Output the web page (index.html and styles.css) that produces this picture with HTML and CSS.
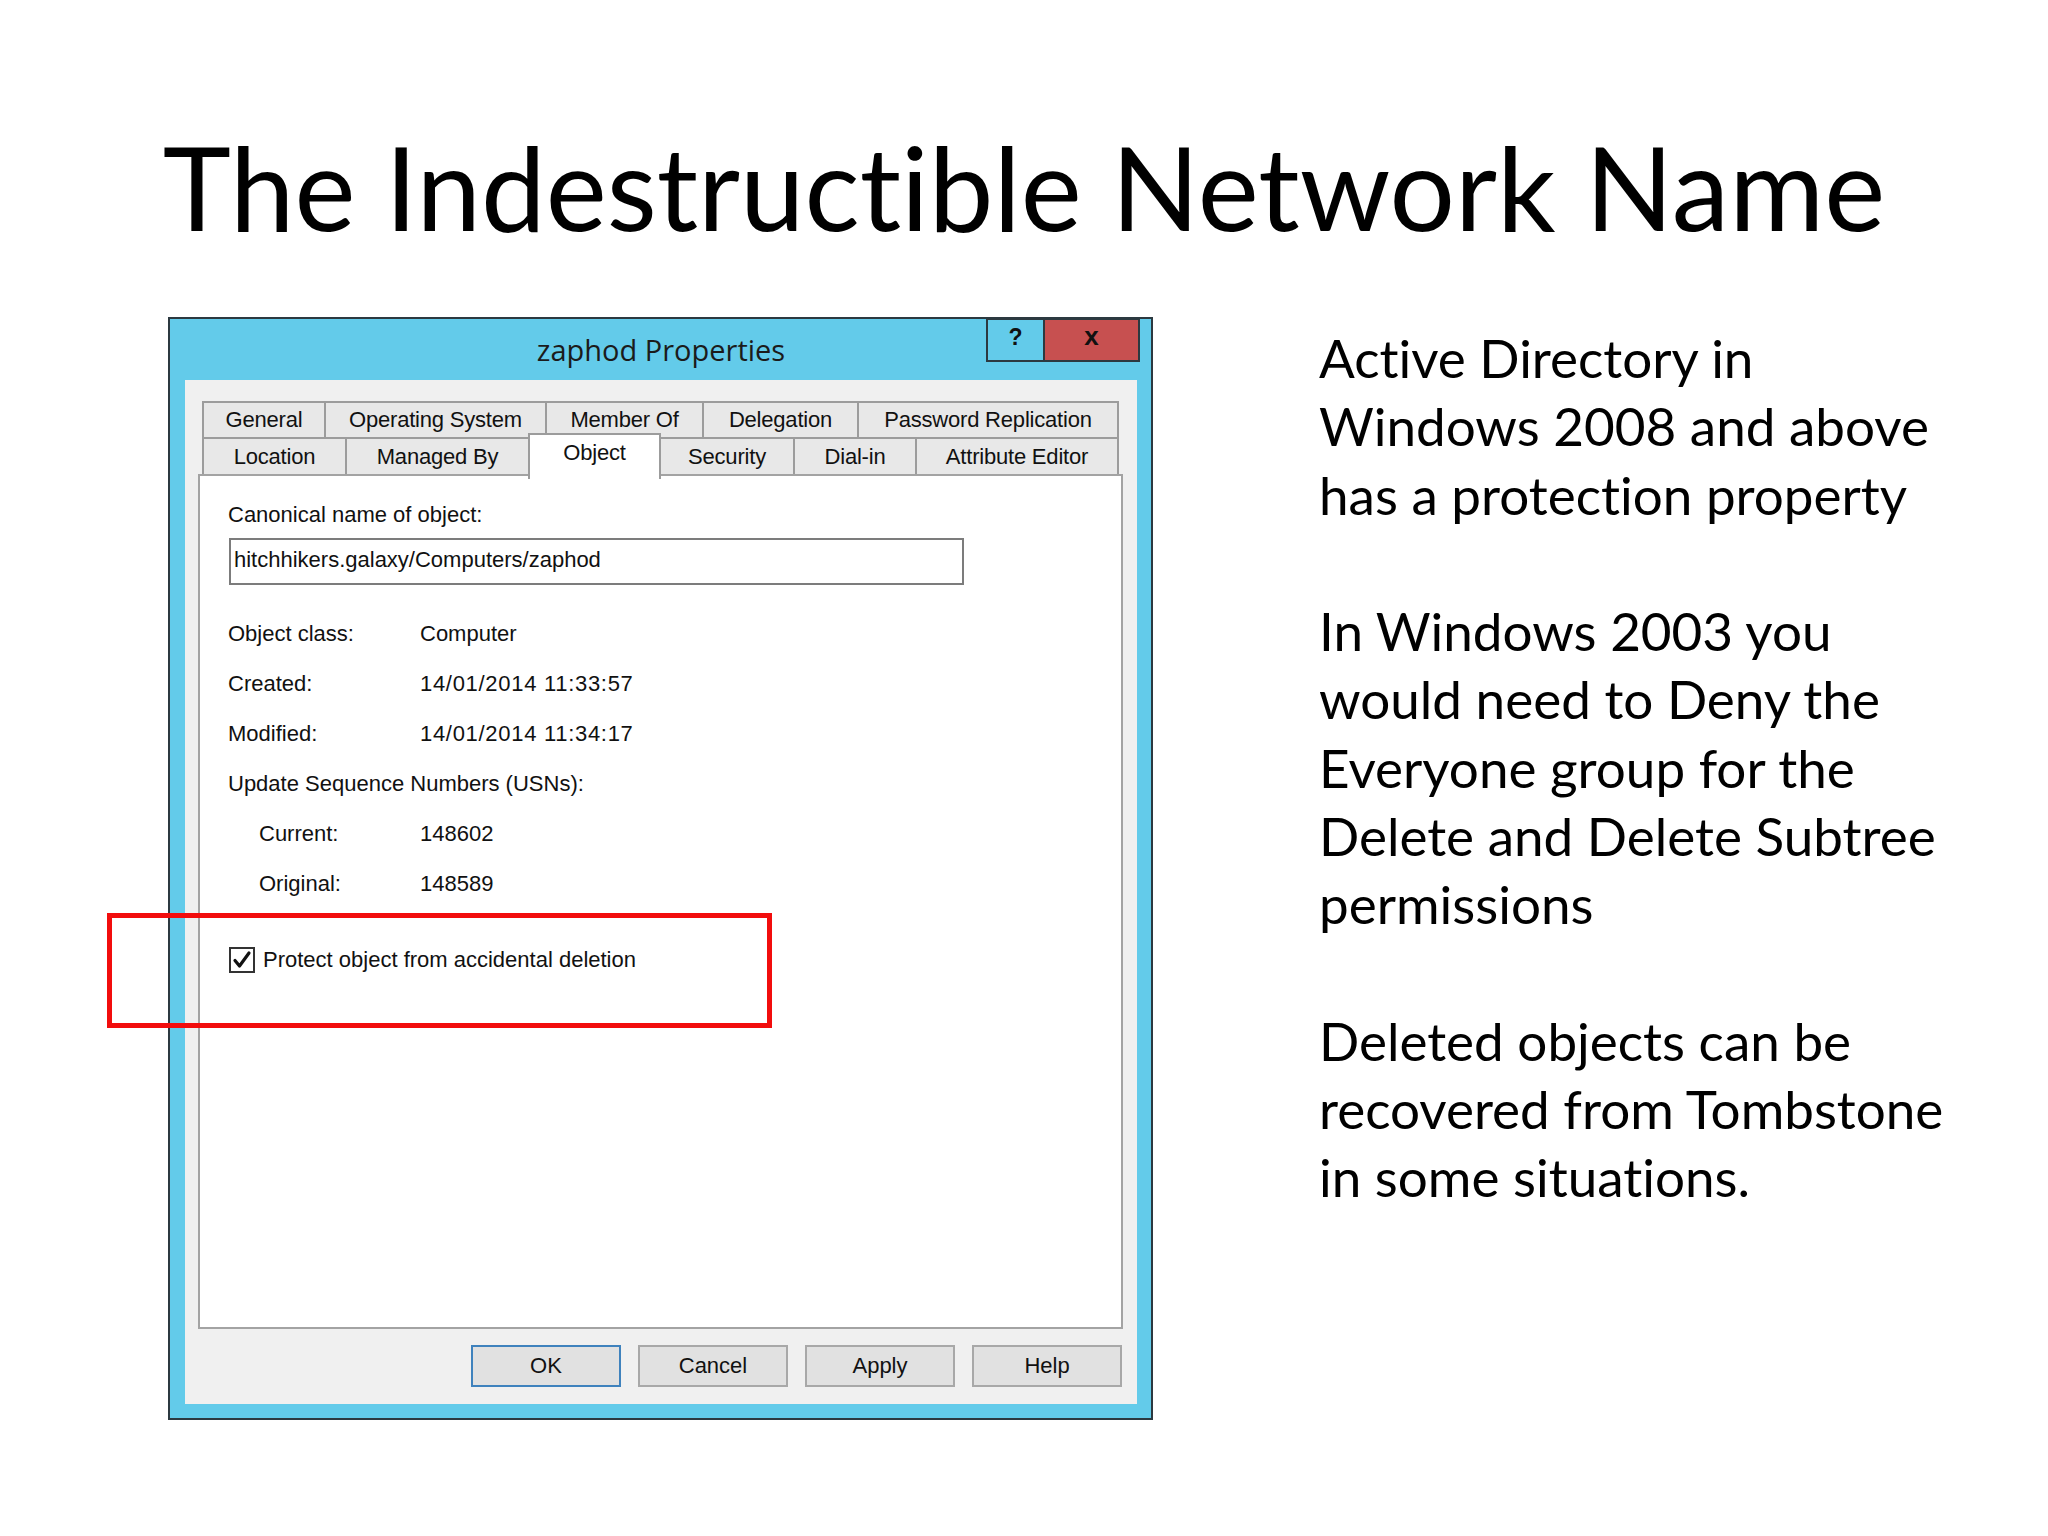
FILE: index.html
```html
<!DOCTYPE html>
<html>
<head>
<meta charset="utf-8">
<title>The Indestructible Network Name</title>
<link rel="stylesheet" href="styles.css">
</head>
<body>
<div class="slide">
  <h1 class="title">The Indestructible Network Name</h1>
  <div class="main">
    <div class="dialog">
      <div class="titlebar">
        <div class="caption">zaphod Properties</div>
        <div class="winbtns">
          <div class="wbtn help-btn">?</div>
          <div class="wbtn close-btn">x</div>
        </div>
      </div>
      <div class="panel">
        <div class="tabs">
          <div class="tabrow row1">
            <div class="tab">General</div>
            <div class="tab">Operating System</div>
            <div class="tab">Member Of</div>
            <div class="tab">Delegation</div>
            <div class="tab">Password Replication</div>
          </div>
          <div class="tabrow row2">
            <div class="tab">Location</div>
            <div class="tab">Managed By</div>
            <div class="tab active">Object</div>
            <div class="tab">Security</div>
            <div class="tab">Dial-in</div>
            <div class="tab">Attribute Editor</div>
          </div>
        </div>
        <div class="content">
          <div class="line">Canonical name of object:</div>
          <div class="textbox">hitchhikers.galaxy/Computers/zaphod</div>
          <div class="props">
            <div>Object class:</div><div>Computer</div>
            <div>Created:</div><div class="num">14/01/2014 11:33:57</div>
            <div>Modified:</div><div class="num">14/01/2014 11:34:17</div>
            <div class="span2">Update Sequence Numbers (USNs):</div>
            <div class="sub">Current:</div><div>148602</div>
            <div class="sub">Original:</div><div>148589</div>
          </div>
          <div class="check-row">
            <span class="checkbox"><svg width="22" height="22" viewBox="0 0 22 22"><path d="M4 11.5 L8.5 17 L18 4" fill="none" stroke="#111" stroke-width="3.2" stroke-linecap="round" stroke-linejoin="round"/></svg></span>
            <span>Protect object from accidental deletion</span>
          </div>
        </div>
        <div class="buttons">
          <div class="btn default">OK</div>
          <div class="btn">Cancel</div>
          <div class="btn">Apply</div>
          <div class="btn">Help</div>
        </div>
      </div>
    </div>
    <div class="notes">
      <p>Active Directory in<br>Windows 2008 and above<br>has a protection property</p>
      <p>In Windows 2003 you<br>would need to Deny the<br>Everyone group for the<br>Delete and Delete Subtree<br>permissions</p>
      <p>Deleted objects can be<br>recovered from Tombstone<br>in some situations.</p>
    </div>
    <div class="highlight"></div>
  </div>
</div>
</body>
</html>
```

FILE: styles.css
```css
html, body {
  margin: 0;
  padding: 0;
  background: #ffffff;
}

.slide {
  width: 2048px;
  height: 1536px;
  position: relative;
  overflow: hidden;
  background: #ffffff;
  color: #000;
  font-family: Lato, "Open Sans", sans-serif;
  font-variant-ligatures: none;
}

.title {
  margin: 0;
  padding-top: 117px;
  font-weight: 400;
  font-size: 115.5px;
  line-height: 140px;
  text-align: center;
  white-space: nowrap;
}

.main {
  position: relative;
  display: flex;
  align-items: flex-start;
  margin-top: 60px;
  padding-left: 168px;
}

/* ---------- dialog ---------- */
.dialog {
  flex: none;
  width: 985px;
  height: 1103px;
  box-sizing: border-box;
  border: 2px solid #2c3940;
  background: #63cbea;
  display: flex;
  flex-direction: column;
  padding: 0 14px 14px 15px;
  font-family: "Liberation Sans", Arial, sans-serif;
  font-size: 22px;
  color: #111;
}

.titlebar {
  height: 61px;
  flex: none;
  display: grid;
  grid-template-columns: 1fr auto 1fr;
  align-items: start;
}

.caption {
  grid-column: 2;
  font-family: "Open Sans", sans-serif;
  font-size: 29px;
  line-height: 29px;
  padding-top: 16px;
  color: #1b1b1b;
  white-space: nowrap;
}

.winbtns {
  grid-column: 3;
  justify-self: end;
  display: flex;
  margin-top: -1px;
  margin-right: -3px;
}

.wbtn {
  height: 44px;
  box-sizing: border-box;
  border: 2px solid #2c3940;
  text-align: center;
  font-weight: 700;
  color: #111;
  line-height: 34px;
}

.help-btn {
  width: 59px;
  font-size: 23px;
}

.close-btn {
  width: 95px;
  border-left: none;
  background: #c75050;
  font-size: 26px;
  line-height: 32px;
}

.panel {
  flex: 1;
  background: #f0f0f0;
  padding: 21px 14px 17px 13px;
  display: flex;
  flex-direction: column;
}

.tabs {
  flex: none;
  margin: 0 3px 0 4px;
}

.tabrow {
  display: grid;
  height: 38px;
}

.row1 {
  grid-template-columns: 124px 221px 157px 155px 260px;
}

.row2 {
  grid-template-columns: 145px 183px 131px 134px 122px 202px;
  height: 39px;
  margin-top: -2px;
}

.tab {
  border: 2px solid #9c9c9c;
  border-left: none;
  background: #e8e8e8;
  text-align: center;
  line-height: 34px;
  white-space: nowrap;
  letter-spacing: -0.2px;
}

.row2 .tab {
  line-height: 35px;
}

.tab:first-child {
  border-left: 2px solid #9c9c9c;
}

.row2 .tab.active {
  position: relative;
  z-index: 1;
  margin: -4px 0 -3px -2px;
  border-left: 2px solid #9c9c9c;
  border-bottom: none;
  background: #ffffff;
  line-height: 36px;
}

.content {
  flex: 1;
  margin-top: -2px;
  background: #ffffff;
  border: 2px solid #a3a3a3;
  padding: 26px 28px 0 28px;
  line-height: 26px;
}

.textbox {
  margin: 10px 0 0 1px;
  width: 735px;
  height: 47px;
  box-sizing: border-box;
  border: 2px solid #7c7c7c;
  padding-left: 3px;
  line-height: 39px;
  white-space: nowrap;
}

.props {
  margin-top: 36px;
  display: grid;
  grid-template-columns: 192px 1fr;
  row-gap: 24px;
}

.props .span2 {
  grid-column: 1 / 3;
}

.props .sub {
  padding-left: 31px;
}

.props .num {
  letter-spacing: 0.7px;
}

.check-row {
  margin: 50px 0 0 1px;
  display: flex;
  align-items: center;
  gap: 8px;
}

.checkbox {
  width: 26px;
  height: 26px;
  box-sizing: border-box;
  border: 2px solid #333;
  background: #fff;
  display: flex;
  align-items: center;
  justify-content: center;
}

.buttons {
  flex: none;
  display: flex;
  justify-content: flex-end;
  gap: 17px;
  margin: 16px 1px 0 0;
}

.btn {
  width: 150px;
  height: 42px;
  box-sizing: border-box;
  border: 2px solid #a8a8a8;
  background: #e1e1e1;
  text-align: center;
  line-height: 38px;
}

.btn.default {
  border-color: #3f82bd;
}

/* ---------- notes ---------- */
.notes {
  margin-left: 166px;
  margin-top: 7px;
  font-size: 53px;
  line-height: 68.25px;
  white-space: nowrap;
}

.notes p {
  margin: 0 0 68.25px 0;
}

/* ---------- annotation ---------- */
.highlight {
  position: absolute;
  left: 107px;
  top: 596px;
  width: 665px;
  height: 115px;
  box-sizing: border-box;
  border: 5px solid #f20d0d;
}
```
